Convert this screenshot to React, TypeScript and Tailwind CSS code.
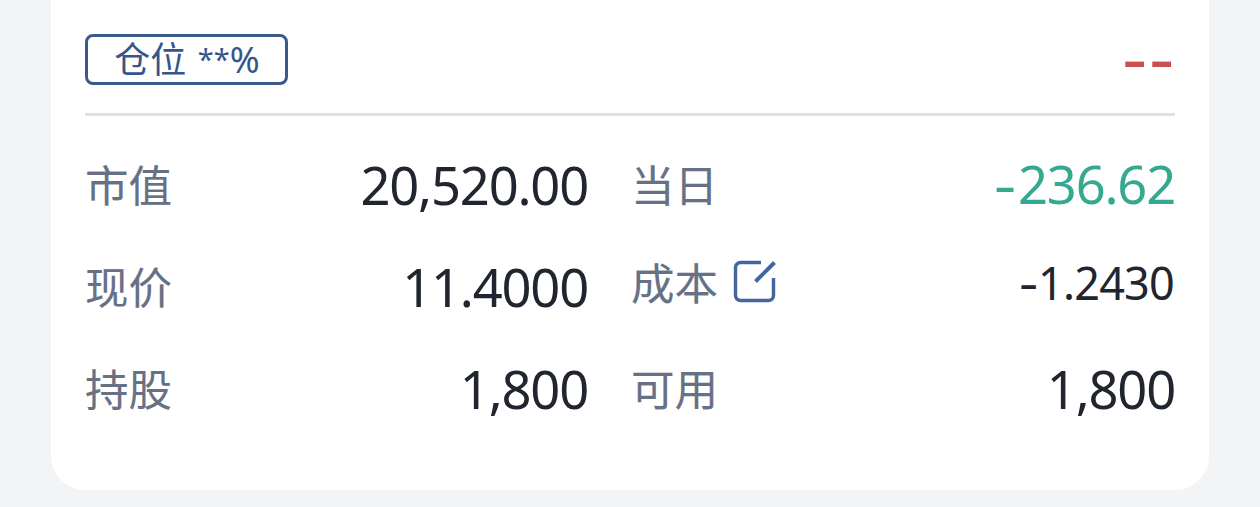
import React from 'react';
import clsx from 'clsx';

interface FieldProps {
  label: string;
  value: string;
  tone?: 'default' | 'down';
  compact?: boolean;
  editable?: boolean;
}

function EditIcon() {
  return (
    <svg width="44" height="44" viewBox="0 0 44 44" fill="none" stroke="#4366a0" strokeWidth="3.4">
      <path d="M29 2.5H8.5a5 5 0 0 0-5 5v28a5 5 0 0 0 5 5h28a5 5 0 0 0 5-5V18" />
      <path d="M23.5 21.5 42.5 2.5" strokeWidth="4" />
    </svg>
  );
}

function Field({ label, value, tone = 'default', compact = false, editable = false }: FieldProps) {
  const negative = value.startsWith('-');
  const digits = negative ? value.slice(1) : value;

  return (
    <div className={clsx('flex h-[102px] items-center justify-between', compact && 'pb-2')}>
      <div className="flex items-center gap-[14px]">
        <span className="text-[43.5px] leading-none text-[#677185] [-webkit-text-stroke:0.15px_#677185]">{label}</span>
        {editable && <EditIcon />}
      </div>
      <span
        className={clsx(
          "pt-[3px] font-['Noto_Sans'] leading-none",
          compact ? 'pr-px text-[45px] tracking-[-0.8px]' : 'text-[52.5px] tracking-[-1.2px]',
          tone === 'down' ? 'text-[#35a890]' : 'text-[#20252f]'
        )}
      >
        {negative && <span className={clsx("inline-block font-['Inter'] leading-none", compact ? 'align-[-1px]' : 'mr-[2px] align-[-2px]')}>-</span>}
        {digits}
      </span>
    </div>
  );
}

export default function App() {
  return (
    <div className="h-[507px] overflow-hidden bg-[#f3f4f6] px-[51px] font-['Noto_Sans_CJK_SC',sans-serif]">
      <div className="h-[490px] rounded-b-[34px] bg-white px-[34px] pt-[34px]">
        {/* Position badge and hidden amount */}
        <div className="flex h-[82px] items-start justify-between border-b-[3px] border-[#dfe1e4]">
          <div className="flex h-[51px] w-[203px] items-center justify-center rounded-lg border-[3px] border-[#3b5a8c] font-['Noto_Sans','Noto_Sans_CJK_SC',sans-serif] text-[36px] leading-none text-[#36568b]">
            <span className="[word-spacing:2px]">
              仓位 <span className="align-[3px] text-[29px] leading-none">**</span>
              <span className="tracking-[-1px]">%</span>
            </span>
          </div>
          <span className="font-['Inter'] text-[58px] font-medium leading-[55px] text-[#c94f51]">--</span>
        </div>

        {/* Holding details */}
        <div className="grid grid-cols-[503px_544px] gap-x-[43px] pt-[17px]">
          <Field label="市值" value="20,520.00" />
          <Field label="当日" value="-236.62" tone="down" />
          <Field label="现价" value="11.4000" />
          <Field label="成本" value="-1.2430" compact editable />
          <Field label="持股" value="1,800" />
          <Field label="可用" value="1,800" />
        </div>
      </div>
    </div>
  );
}
